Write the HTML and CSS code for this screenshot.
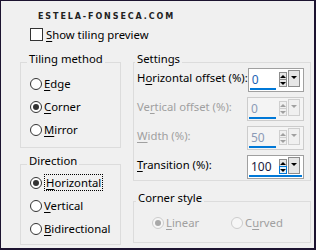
FILE: index.html
```html
<!DOCTYPE html>
<html lang="en">
<head>
  <meta charset="UTF-8">
  <meta name="viewport" content="width=device-width, initial-scale=1.0">
  <title>Tiling</title>
  <link rel="stylesheet" href="styles.css">
</head>
<body>
  <div class="dialog">
    <div class="watermark">ESTELA-FONSECA.COM</div>

    <div class="check-row">
      <span class="checkbox"></span>
      <span><u>S</u>how tiling preview</span>
    </div>

    <div class="columns">
      <div class="column">
        <div class="group tiling">
          <div class="group-title">Tiling method</div>
          <div class="radio-list">
            <div class="radio"><span class="circle"></span><span><u>E</u>dge</span></div>
            <div class="radio"><span class="circle checked"></span><span><u>C</u>orner</span></div>
            <div class="radio"><span class="circle"></span><span><u>M</u>irror</span></div>
          </div>
        </div>

        <div class="group direction">
          <div class="group-title">Direction</div>
          <div class="radio-list">
            <div class="radio"><span class="circle checked"></span><span class="focus"><u>H</u>orizontal</span></div>
            <div class="radio"><span class="circle"></span><span><u>V</u>ertical</span></div>
            <div class="radio"><span class="circle"></span><span><u>B</u>idirectional</span></div>
          </div>
        </div>
      </div>

      <div class="column">
        <div class="group settings">
          <div class="group-title">Settings</div>
          <div class="setting-list">
            <div class="setting">
              <span class="setting-label">H<u>o</u>rizontal offset (%):</span>
              <div class="spin">
                <div class="spin-top">
                  <span class="spin-value active">0</span>
                  <span class="spin-arrows"><span class="spin-btn"><i class="up"></i></span><span class="spin-btn"><i class="down"></i></span></span>
                  <span class="spin-drop"><i class="down"></i></span>
                </div>
                <div class="spin-bar"><span style="width: 50%"></span></div>
              </div>
            </div>
            <div class="setting disabled">
              <span class="setting-label">Ve<u>r</u>tical offset (%):</span>
              <div class="spin">
                <div class="spin-top">
                  <span class="spin-value">0</span>
                  <span class="spin-arrows"><span class="spin-btn"><i class="up"></i></span><span class="spin-btn"><i class="down"></i></span></span>
                  <span class="spin-drop"><i class="down"></i></span>
                </div>
                <div class="spin-bar"><span style="width: 50%"></span></div>
              </div>
            </div>
            <div class="setting disabled">
              <span class="setting-label"><u>W</u>idth (%):</span>
              <div class="spin">
                <div class="spin-top">
                  <span class="spin-value">50</span>
                  <span class="spin-arrows"><span class="spin-btn"><i class="up"></i></span><span class="spin-btn"><i class="down"></i></span></span>
                  <span class="spin-drop"><i class="down"></i></span>
                </div>
                <div class="spin-bar"><span style="width: 50%"></span></div>
              </div>
            </div>
            <div class="setting">
              <span class="setting-label"><u>T</u>ransition (%):</span>
              <div class="spin">
                <div class="spin-top">
                  <span class="spin-value">100</span>
                  <span class="spin-arrows"><span class="spin-btn"><i class="up"></i></span><span class="spin-btn hot"><i class="down"></i></span></span>
                  <span class="spin-drop"><i class="down"></i></span>
                </div>
                <div class="spin-bar"><span style="width: 100%"></span></div>
              </div>
            </div>
          </div>
        </div>

        <div class="group corner">
          <div class="group-title">Corner style</div>
          <div class="radio-row">
            <div class="radio disabled"><span class="circle checked"></span><span><u>L</u>inear</span></div>
            <div class="radio disabled"><span class="circle"></span><span>C<u>u</u>rved</span></div>
          </div>
        </div>
      </div>
    </div>
  </div>
</body>
</html>
```

FILE: styles.css
```css
body {
  margin: 0;
  font-family: "Noto Sans", sans-serif;
  font-size: 11.3px;
  color: #000;
}

.dialog {
  box-sizing: border-box;
  width: 316px;
  height: 250px;
  background-color: #f0f0f0;
  border: 1px solid #1c1330;
  border-right-width: 2px;
  border-bottom-width: 2px;
  padding-left: 19px;
  overflow: hidden;
  white-space: nowrap;
}

u {
  text-decoration-thickness: 1px;
  text-underline-offset: 2px;
}

.watermark {
  margin: 11px 0 0 18px;
  font-family: "DejaVu Sans", sans-serif;
  font-weight: bold;
  font-size: 8px;
  line-height: 10px;
  letter-spacing: 1.9px;
  color: #222;
}

.check-row {
  display: flex;
  align-items: center;
  gap: 3px;
  height: 15px;
  margin: 5px 0 0 10px;
  line-height: 15px;
}

.checkbox {
  box-sizing: border-box;
  width: 13px;
  height: 13px;
  border: 1px solid #333;
  background-color: #fff;
}

.columns {
  display: grid;
  grid-template-columns: 101px 178px;
  column-gap: 12px;
  margin-top: 20px;
}

.column {
  display: flex;
  flex-direction: column;
}

.group {
  border: 1px solid #dcdcdc;
}

.group-title {
  width: fit-content;
  margin: -12px 0 0 6px;
  padding: 0 2px;
  line-height: 15px;
  background-color: #f0f0f0;
}

.settings .group-title {
  margin-left: 1px;
}

.corner .group-title {
  margin-left: 2px;
}

.radio {
  display: flex;
  align-items: center;
  gap: 2px;
  height: 23px;
  line-height: 15px;
}

.circle {
  box-sizing: border-box;
  display: flex;
  align-items: center;
  justify-content: center;
  width: 12px;
  height: 12px;
  border: 1px solid #333;
  border-radius: 50%;
  background-color: #fff;
}

.circle.checked::after {
  content: "";
  width: 6px;
  height: 6px;
  border-radius: 50%;
  background-color: #333;
}

.radio.disabled {
  color: #a0a0a0;
}

.radio.disabled .circle {
  border-color: #cccccc;
  background-color: #f6f6f6;
}

.radio.disabled .circle.checked::after {
  background-color: #a8a8a8;
}

.focus {
  outline: 1px dotted #000;
  outline-offset: 0;
  padding: 0 1px;
  margin-left: 1px;
}

.tiling .radio-list {
  padding: 6px 0 6px 9px;
}

.direction {
  margin-top: 16px;
}

.direction .radio-list {
  padding: 3px 0 4px 9px;
}

.setting-list {
  display: flex;
  flex-direction: column;
  gap: 5px;
  padding: 2px 6px 1px 3px;
}

.setting {
  display: flex;
  justify-content: space-between;
  align-items: flex-start;
  height: 24px;
}

.setting-label {
  padding-top: 2px;
  line-height: 15px;
}

.setting.disabled .setting-label {
  color: #a0a0a0;
}

.spin {
  box-sizing: border-box;
  width: 57px;
  height: 24px;
  border: 1px solid #a0a0a0;
  background-color: #fff;
}

.spin-top {
  display: flex;
  height: 19px;
}

.spin-value {
  flex: 1;
  padding: 3px 0 0 3px;
  line-height: 16px;
  font-size: 12px;
  color: #1a1a40;
}

.spin-value.active {
  color: #1a5fb4;
}

.spin-arrows {
  display: flex;
  flex-direction: column;
  width: 8px;
  margin-top: 3px;
}

.spin-btn {
  box-sizing: border-box;
  display: flex;
  align-items: center;
  justify-content: center;
  height: 8px;
  border: 1px solid #8c8c8c;
  background-color: #e6e6e6;
}

.spin-btn + .spin-btn {
  margin-top: -1px;
}

.spin-btn.hot {
  border-color: #0078d7;
  background-color: #e5f1fb;
}

.spin-drop {
  box-sizing: border-box;
  display: flex;
  justify-content: center;
  width: 12px;
  height: 17px;
  margin: 1px 3px 0 1px;
  padding-top: 5px;
  border: 1px solid #8c8c8c;
  background-color: #e6e6e6;
}

.up,
.down {
  width: 0;
  height: 0;
  border-left: 3px solid transparent;
  border-right: 3px solid transparent;
}

.up {
  border-bottom: 3px solid #000;
}

.down {
  border-top: 3px solid #000;
}

.spin-bar {
  height: 2px;
  margin: 0 1px;
}

.spin-bar span {
  display: block;
  height: 2px;
  background-color: #0078d7;
}

.setting.disabled .spin {
  border-color: #cccccc;
  background-color: #f4f4f4;
}

.setting.disabled .spin-value {
  color: #8a9ab6;
}

.setting.disabled .spin-btn,
.setting.disabled .spin-drop {
  border-color: #cfcfcf;
  background-color: #f0f0f0;
}

.setting.disabled .up {
  border-bottom-color: #a0a0a0;
}

.setting.disabled .down {
  border-top-color: #a0a0a0;
}

.corner {
  margin-top: 20px;
}

.radio-row {
  display: flex;
  padding: 6px 0 8px 18px;
}

.radio-row .radio {
  width: 82px;
}
```
